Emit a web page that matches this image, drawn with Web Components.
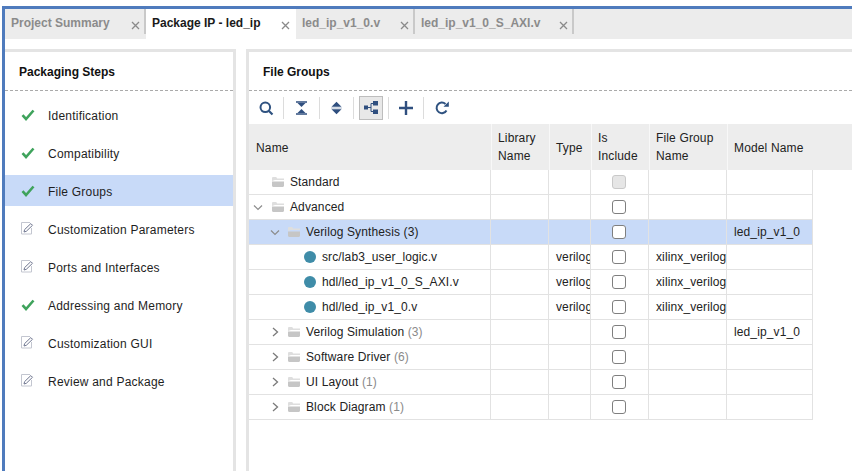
<!DOCTYPE html>
<html>
<head>
<meta charset="utf-8">
<title>Package IP</title>
<style>
  html, body { margin: 0; height: 100%; background: #fff; overflow: hidden; }
  body { font: 12px "Liberation Sans", Arial, sans-serif; color: #1a1a1a; }
</style>
</head>
<body>
<ip-window>
  <tab-bar slot="tabs">
    <doc-tab width="141" label="Project Summary"></doc-tab>
    <doc-tab width="150" label="Package IP - led_ip" active></doc-tab>
    <doc-tab width="119" label="led_ip_v1_0.v"></doc-tab>
    <doc-tab width="159" label="led_ip_v1_0_S_AXI.v"></doc-tab>
  </tab-bar>
  <steps-panel slot="left">
    <step-row state="done">Identification</step-row>
    <step-row state="done">Compatibility</step-row>
    <step-row state="done" selected>File Groups</step-row>
    <step-row state="edit">Customization Parameters</step-row>
    <step-row state="edit">Ports and Interfaces</step-row>
    <step-row state="done">Addressing and Memory</step-row>
    <step-row state="edit">Customization GUI</step-row>
    <step-row state="edit">Review and Package</step-row>
  </steps-panel>
  <groups-panel slot="right">
    <groups-toolbar></groups-toolbar>
    <groups-table></groups-table>
  </groups-panel>
</ip-window>

<script>
const ICON = {
  check: `<svg width="14" height="12" viewBox="0 0 14 12"><path d="M1.500 6.200 5 10 12.500 1.500" fill="none" stroke="#3fa35c" stroke-width="2.600"/></svg>`,
  edit: `<svg width="13" height="13" viewBox="0 0 13 13"><path d="M9 .5H.5v11.500h10V6" fill="#fff" stroke="#c3c6d0"/><path d="M3 10l.6-2.400L9.800 1.600l1.700 1.700-6.200 6z" fill="#fff" stroke="#6f7690"/></svg>`,
  folder: `<svg width="12" height="10" viewBox="0 0 12 10"><path d="M0 1.200C0 .5.5 0 1.200 0h3l1 1.500h6.800V3H3L0 4z" fill="#dedede"/><path d="M0 4.600h12v4.200c0 .7-.5 1.200-1.200 1.200H1.200C.5 10 0 9.500 0 8.800z" fill="#c6c6c6"/></svg>`,
  open: `<svg width="10" height="7" viewBox="0 0 10 7"><path d="M1 1.500 5 5.500 9 1.500" fill="none" stroke="#8c8c8c" stroke-width="1.200"/></svg>`,
  closed: `<svg width="7" height="10" viewBox="0 0 7 10"><path d="M1 1 5.500 5 1 9" fill="none" stroke="#7a7a7a" stroke-width="1.300"/></svg>`,
  close: `<svg width="9" height="9" viewBox="0 0 9 9"><path d="M1 1 8 8M8 1 1 8" fill="none" stroke="#8a8a8a" stroke-width="1.300"/></svg>`,
  search: `<svg width="15" height="15" viewBox="0 0 15 15"><circle cx="6.300" cy="6.300" r="4.800" fill="none" stroke="#2f5280" stroke-width="2"/><path d="M10 10l3.500 3.500" stroke="#2f5280" stroke-width="2.200"/></svg>`,
  collapse: `<svg width="13" height="14" viewBox="0 0 13 14"><path d="M1 1h11M1 13h11" stroke="#2f4f7f" stroke-width="1.500"/><path d="M2.500 2h8L6.500 6zM2.500 12h8L6.500 8z" fill="#2f4f7f"/></svg>`,
  expand: `<svg width="11" height="14" viewBox="0 0 11 14"><path d="M.5 5.800 5.500 .8l5 5zM.5 8.200l5 5 5-5z" fill="#2f4f7f"/><path d="M0 7h11" stroke="#a9b8cc" stroke-width="1"/></svg>`,
  hier: `<svg width="14" height="13" viewBox="0 0 14 13"><path d="M4 6.500h3M7 2.500v8M7 2.500h2M7 10.500h2" fill="none" stroke="#2f4f7f"/><rect x="0" y="4.500" width="4" height="4" fill="#2f4f7f"/><rect x="9" y="0" width="5" height="4.500" fill="#2f4f7f"/><rect x="9" y="8.500" width="5" height="4.500" fill="#2f4f7f"/></svg>`,
  plus: `<svg width="14" height="14" viewBox="0 0 14 14"><path d="M7 0v14M0 7h14" stroke="#2f4f7f" stroke-width="2.400"/></svg>`,
  refresh: `<svg width="14" height="14" viewBox="0 0 14 14"><path d="M11.500 9.500A5.300 5.300 0 1 1 10.500 3" fill="none" stroke="#2f5280" stroke-width="2"/><path d="M8.500 5.800h5.300V.6z" fill="#2f5280"/></svg>`
};

function shadow(el, html) {
  el.attachShadow({ mode: "open" }).innerHTML = html;
}

class IpWindow extends HTMLElement {
  connectedCallback() {
    shadow(this, `<style>
      :host { display: flex; flex-direction: column; height: 471px; box-sizing: border-box; padding: 6px 0 0 2px; }
      .frame { flex: 1; display: flex; flex-direction: column; min-height: 0; border: solid #4f7bbd; border-width: 3px 0 0 3px; }
      .body { flex: 1; display: flex; margin-top: 10px; min-height: 0; }
      .left { width: 228px; flex: none; display: flex; }
      .right { flex: 1; display: flex; min-width: 0; margin-left: 13px; }
    </style>
    <div class="frame">
      <slot name="tabs"></slot>
      <div class="body">
        <div class="left"><slot name="left"></slot></div>
        <div class="right"><slot name="right"></slot></div>
      </div>
    </div>`);
  }
}

class TabBar extends HTMLElement {
  connectedCallback() {
    shadow(this, `<style>
      :host { display: flex; height: 30px; background: #ececec; }
    </style><slot></slot>`);
  }
}

class DocTab extends HTMLElement {
  connectedCallback() {
    const active = this.hasAttribute("active");
    shadow(this, `<style>
      :host { display: block; box-sizing: border-box; width: ${this.getAttribute("width")}px; height: ${active ? 30 : 25}px;
        position: relative; background: ${active ? "#fff" : "transparent"};
        border-right: ${active ? "0" : "2px solid #c9c9c9"}; }
      .t { display: block; padding: 7px 0 0 6px; font-weight: bold; line-height: 14px; white-space: nowrap;
        color: ${active ? "#1a1a1a" : "#8b8b8b"}; }
      .x { position: absolute; right: ${active ? 6 : 4}px; top: 12px; line-height: 0; }
    </style><span class="t">${this.getAttribute("label")}</span><span class="x">${ICON.close}</span>`);
  }
}

class StepsPanel extends HTMLElement {
  connectedCallback() {
    shadow(this, `<style>
      :host { display: flex; flex-direction: column; flex: 1; border: solid #e4e4e4; border-width: 3px 3px 0 0; margin-right: -3px; }
      h2 { margin: 0; height: 39px; line-height: 40px; padding-left: 14px; font-size: 12px; font-weight: bold; color: #111; box-sizing: border-box;
        border-bottom: 1px dashed #aaa; }
      .list { padding-top: 4px; display: flex; flex-direction: column; }
    </style><h2>Packaging Steps</h2><div class="list"><slot></slot></div>`);
  }
}

class StepRow extends HTMLElement {
  connectedCallback() {
    const done = this.getAttribute("state") === "done";
    shadow(this, `<style>
      :host { display: flex; align-items: center; height: 38px; }
      .row { flex: 1; height: 31px; box-sizing: border-box; padding-top: 4px; display: flex; align-items: center;
        background: ${this.hasAttribute("selected") ? "#c8daf8" : "transparent"}; }
      .i { width: 43px; padding-left: 16px; box-sizing: border-box; line-height: 0; position: relative; top: ${done ? -1 : -2}px; }
      .t { letter-spacing: .22px; color: #1e1e1e; }
    </style><div class="row"><span class="i">${done ? ICON.check : ICON.edit}</span><span class="t"><slot></slot></span></div>`);
  }
}

class GroupsPanel extends HTMLElement {
  connectedCallback() {
    shadow(this, `<style>
      :host { display: flex; flex-direction: column; flex: 1; min-width: 0; border: solid #e4e4e4; border-width: 3px 0 0 3px; }
      h2 { margin: 0; height: 39px; line-height: 40px; padding-left: 14px; font-size: 12px; font-weight: bold; color: #111; box-sizing: border-box;
        border-bottom: 1px dashed #aaa; }
    </style><h2>File Groups</h2><slot></slot>`);
  }
}

class GroupsToolbar extends HTMLElement {
  connectedCallback() {
    const btn = (icon, w, cls = "") => `<span class="b ${cls}" style="width:${w}px">${icon}</span>`;
    shadow(this, `<style>
      :host { display: flex; align-items: center; height: 33px; padding-left: 5px; }
      .b { display: flex; align-items: center; justify-content: center; height: 24px; box-sizing: border-box; flex: none; }
      .find { padding: 1px 5px 0 0; }
      .on { background: #e8e8e8; border: 1px solid #bdbdbd; margin: 0 5px; }
      .s { width: 1px; height: 22px; background: #dcdcdc; flex: none; }
    </style>
    ${btn(ICON.search, 29, "find")}<span class="s"></span>
    ${btn(ICON.collapse, 35)}<span class="s"></span>
    ${btn(ICON.expand, 33)}<span class="s"></span>
    ${btn(ICON.hier, 24, "on")}<span class="s"></span>
    ${btn(ICON.plus, 34)}<span class="s"></span>
    ${btn(ICON.refresh, 36)}`);
  }
}

const COLS = "242px 58px 42px 58px 78px 86px";
const ROWS = [
  { name: "Standard", level: 0, kind: "folder", dis: true },
  { name: "Advanced", level: 0, kind: "folder", arrow: "open" },
  { name: "Verilog Synthesis", count: "(3)", dark: true, level: 1, kind: "folder", arrow: "open", sel: true, model: "led_ip_v1_0" },
  { name: "src/lab3_user_logic.v", level: 2, kind: "file", type: "verilog", group: "xilinx_verilog" },
  { name: "hdl/led_ip_v1_0_S_AXI.v", level: 2, kind: "file", type: "verilog", group: "xilinx_verilog" },
  { name: "hdl/led_ip_v1_0.v", level: 2, kind: "file", type: "verilog", group: "xilinx_verilog" },
  { name: "Verilog Simulation", count: "(3)", level: 1, kind: "folder", arrow: "closed", model: "led_ip_v1_0" },
  { name: "Software Driver", count: "(6)", level: 1, kind: "folder", arrow: "closed" },
  { name: "UI Layout", count: "(1)", level: 1, kind: "folder", arrow: "closed" },
  { name: "Block Diagram", count: "(1)", level: 1, kind: "folder", arrow: "closed" }
];

class GroupsTable extends HTMLElement {
  connectedCallback() {
    const head = ["Name", "Library<br>Name", "Type", "Is<br>Include", "File Group<br>Name", "Model Name"]
      .map((h, i) => `<div class="hc${i === 0 ? " first" : ""}${h.includes("<br>") ? "" : " one"}">${h}</div>`).join("");
    const rows = ROWS.map((r) => {
      const arrow = r.arrow ? ICON[r.arrow] : "";
      const lead = r.kind === "file"
        ? `<span class="dot"></span>`
        : `<span class="ar l${r.level}">${arrow}</span><span class="fo">${ICON.folder}</span>`;
      const count = r.count ? ` <span class="${r.dark ? "" : "cnt"}">${r.count}</span>` : "";
      const pad = [4, 20, 35][r.level];
      return `<div class="row${r.sel ? " sel" : ""}">
        <div class="c name" style="padding-left:${pad}px">${lead}<span class="n">${r.name}${count}</span></div>
        <div class="c"></div>
        <div class="c txt">${r.type || ""}</div>
        <div class="c chk"><span class="box${r.dis ? " dis" : ""}"></span></div>
        <div class="c txt">${r.group || ""}</div>
        <div class="c txt">${r.model || ""}</div>
      </div>`;
    }).join("");
    shadow(this, `<style>
      :host { display: block; color: #222; }
      .head { height: 46px; background: #ededed; display: grid; grid-template-columns: ${COLS} 1fr; }
      .hc { display: flex; align-items: center; padding-left: 6px; line-height: 18px; letter-spacing: .15px; border-left: 1px solid #f8f8f8; box-sizing: border-box; white-space: nowrap; }
      .hc.first { border-left: 0; padding-left: 7px; }
      .hc.one { padding-top: 2px; }
      .row { display: grid; grid-template-columns: ${COLS}; width: 564px; height: 25px; box-sizing: border-box; border-bottom: 1px solid #e2e2e2; }
      .row.sel { background: #c8daf8; }
      .c { display: flex; align-items: center; min-width: 0; border-right: 1px solid #e2e2e2; box-sizing: border-box; white-space: nowrap; overflow: hidden; letter-spacing: .12px; }
      .txt { padding-left: 7px; }
      .chk { justify-content: center; padding-right: 1px; }
      .box { width: 14px; height: 14px; box-sizing: border-box; border: 1px solid #7f7f7f; border-radius: 3px; background: #fff; }
      .box.dis { background: #e6e6e6; border-color: #c9c9c9; }
      .ar { width: 12px; flex: none; line-height: 0; margin-right: 7px; display: flex; justify-content: center; }
      .ar.l0 { margin-left: -1px; margin-right: 8px; }
      .fo { width: 18px; flex: none; line-height: 0; }
      .dot { width: 12px; height: 12px; border-radius: 50%; background: #3f8ca8; flex: none; margin: 0 6px 0 20px; }
      .cnt { color: #8a8a8a; }
    </style>
    <div class="head">${head}</div>${rows}`);
  }
}

customElements.define("ip-window", IpWindow);
customElements.define("tab-bar", TabBar);
customElements.define("doc-tab", DocTab);
customElements.define("steps-panel", StepsPanel);
customElements.define("step-row", StepRow);
customElements.define("groups-panel", GroupsPanel);
customElements.define("groups-toolbar", GroupsToolbar);
customElements.define("groups-table", GroupsTable);
</script>
</body>
</html>
